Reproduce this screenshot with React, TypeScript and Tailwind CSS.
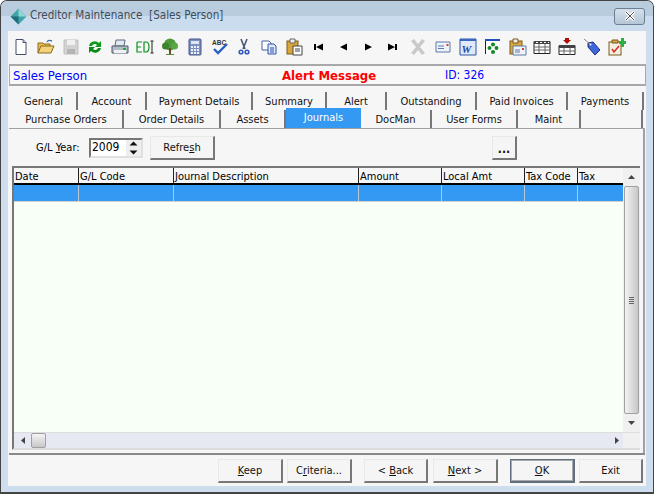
import React from "react";

const font = "font-['Tahoma','DejaVu_Sans_Condensed','Noto_Sans',sans-serif]";

function Ico({ children }: { children: React.ReactNode }) {
  return (
    <svg width="18" height="18" viewBox="0 0 18 18" className="shrink-0">
      {children}
    </svg>
  );
}

const icons: React.ReactNode[] = [
  // new
  <Ico key="new"><path d="M4 1.5h7l3 3v12H4z" fill="#fff" stroke="#44506a" /><path d="M11 1.5v3h3" fill="#cfd8ea" stroke="#44506a" /></Ico>,
  // open
  <Ico key="open"><path d="M1 15V5h5l1 1h6v2" fill="#e8bc55" stroke="#8a6a1c" /><path d="M1 15l3-7h13l-3 7z" fill="#f3d27c" stroke="#8a6a1c" /><path d="M10 4c1-2 3-2 5-1" fill="none" stroke="#3c6ea8" strokeWidth="1.4" /></Ico>,
  // save disabled
  <Ico key="save"><path d="M2 2h14v14H2z" fill="#d2d2d2" stroke="#c0c0c0" /><path d="M5 2h8v5H5z" fill="#f0f0f0" /><path d="M5 11h8v5H5z" fill="#b4b4b4" /></Ico>,
  // refresh
  <Ico key="refresh"><path d="M3 8a6 6 0 0 1 10-3l2-2v6h-6l2-2a3 3 0 0 0-5 1z" fill="#0d9a1c" /><path d="M15 10a6 6 0 0 1-10 3l-2 2V9h6l-2 2a3 3 0 0 0 5-1z" fill="#0b8a18" /></Ico>,
  // print
  <Ico key="print"><path d="M5 2h9l-1 6H4z" fill="#e4e8f0" stroke="#5d6b80" /><path d="M1 8h16v7H1z" fill="#b4bcc8" stroke="#4f5b6c" /><path d="M3 12h12v3H3z" fill="#eef1f5" /><path d="M12 10h3v2h-3z" fill="#18b030" /></Ico>,
  // ED cursor
  <Ico key="ed"><path d="M1 4h5M1 4v10h5M1 9h4M8 4h2q3 0 3 5t-3 5H8z" fill="none" stroke="#0d8f1e" strokeWidth="1.2" /><path d="M14.5 3h3M16 3v12M14.5 15h3" stroke="#222" fill="none" /></Ico>,
  // tree
  <Ico key="tree"><circle cx="9" cy="6.5" r="6" fill="#4f9a3a" /><circle cx="4.5" cy="8" r="3.5" fill="#3d8430" /><circle cx="13.5" cy="8" r="3.5" fill="#5aa845" /><path d="M8 10h2v6H8z" fill="#6b4a24" /><path d="M5 16.5h8" stroke="#5c8a3a" /></Ico>,
  // calculator
  <Ico key="calc"><rect x="3" y="1" width="12" height="16" rx="1" fill="#7f8fc0" stroke="#48568a" /><path d="M5 3h8v3H5z" fill="#dce4f6" /><path d="M5 8h2v2H5zM8 8h2v2H8zM11 8h2v2h-2zM5 11h2v2H5zM8 11h2v2H8zM11 11h2v2h-2zM5 14h2v2H5zM8 14h2v2H8zM11 14h2v2h-2z" fill="#eef0fa" /></Ico>,
  // spell
  <Ico key="spell"><text x="1" y="6.5" fontSize="6.5" fontWeight="700" fill="#333" fontFamily="'Liberation Sans',sans-serif">ABC</text><path d="M3 11l4 4 9-9" fill="none" stroke="#2a5fc0" strokeWidth="2.4" /></Ico>,
  // cut
  <Ico key="cut"><path d="M6 1l4 10M12 1L8 11" stroke="#4a5a78" strokeWidth="1.6" fill="none" /><circle cx="6" cy="14" r="2.6" fill="#3458b8" /><circle cx="12" cy="14" r="2.6" fill="#3458b8" /><circle cx="6" cy="14" r="1" fill="#fff" /><circle cx="12" cy="14" r="1" fill="#fff" /></Ico>,
  // copy
  <Ico key="copy"><path d="M2 3h7l2 2v7H2z" fill="#fff" stroke="#46639e" /><path d="M8 6h6l2 2v8H8z" fill="#dfe9fa" stroke="#2c54a8" /><path d="M10 10h4M10 12h4M10 14h4" stroke="#2c54a8" /></Ico>,
  // paste
  <Ico key="paste"><rect x="2" y="3" width="11" height="13" fill="#d9a63c" stroke="#7a5a1a" /><path d="M5 1h5v4H5z" fill="#eee" stroke="#666" /><path d="M8 8h9v9H8z" fill="#fff" stroke="#444" /><path d="M10 11h5M10 13h5" stroke="#444" /></Ico>,
  // first
  <Ico key="first"><path d="M4 6h2v6H4zM13 5.5v7L6 9z" fill="#000" /></Ico>,
  // prev
  <Ico key="prev"><path d="M12 5.5v7L5 9z" fill="#000" /></Ico>,
  // next
  <Ico key="next"><path d="M5 5.5v7l7-3.5z" fill="#000" /></Ico>,
  // last
  <Ico key="last"><path d="M4 5.5v7l7-3.5zM11 6h2v6h-2z" fill="#000" /></Ico>,
  // delete disabled
  <Ico key="del"><path d="M2 3l3-2 4 5 4-5 3 2-5 6 5 6-3 2-4-5-4 5-3-2 5-6z" fill="#c9c9c9" /></Ico>,
  // mail
  <Ico key="mail"><path d="M2 4h14v10H2z" fill="#eef3fb" stroke="#5c7aa8" /><path d="M4 8h6M4 10.5h6" stroke="#5c7aa8" /><path d="M12.5 6h2v2h-2z" fill="#d84030" /></Ico>,
  // word
  <Ico key="word"><path d="M1 1h16v16H1z" fill="#dfe9f8" stroke="#2c54a8" /><path d="M1 1h16v2H1z" fill="#3c68c0" /><text x="2.5" y="14.5" fontSize="11" fontWeight="700" fontStyle="italic" fill="#1f4aa8" fontFamily="'Liberation Serif',serif">W</text></Ico>,
  // org
  <Ico key="org"><path d="M1.5 1.5h14v14h-14z" fill="#fff" /><path d="M1 1h15v2H1z" fill="#2050c0" /><path d="M1.5 3v13" stroke="#222" /><circle cx="9" cy="6.5" r="2" fill="#118a22" /><circle cx="5.5" cy="10" r="2" fill="#118a22" /><circle cx="12.5" cy="10" r="2" fill="#118a22" /><circle cx="9" cy="14" r="2" fill="#118a22" /></Ico>,
  // paste mail
  <Ico key="pm"><rect x="1" y="3" width="12" height="13" fill="#d9a63c" stroke="#7a5a1a" /><path d="M4 1h5v4H4z" fill="#eee" stroke="#7a5a1a" /><path d="M4 8h13v9H4z" fill="#eef3fb" stroke="#5c7aa8" /><path d="M6 12h5M6 14h5" stroke="#5c7aa8" /><path d="M13 10h2v2h-2z" fill="#d84030" /></Ico>,
  // table
  <Ico key="table"><path d="M1 3.5h16v12H1z" fill="#fff" stroke="#222" /><path d="M1 3h16v3H1z" fill="#444" /><path d="M3 4.5h2M7 4.5h2M11 4.5h2M15 4.5h1" stroke="#fff" /><path d="M1 9h16M1 12h16M6 6v9M12 6v9" stroke="#666" /></Ico>,
  // table with arrow
  <Ico key="table2"><path d="M1 7.5h16v9H1z" fill="#fff" stroke="#222" /><path d="M1 7h16v3H1z" fill="#444" /><path d="M1 13h16M6 10v7M12 10v7" stroke="#666" /><path d="M7 0h4v2h2l-4 4-4-4h2z" fill="#b00c0c" /></Ico>,
  // tag
  <Ico key="tag"><path d="M5 5l5-1 7 8-5 5-7-8z" fill="#3c68d8" stroke="#1c2f80" /><path d="M1 1l6 5" stroke="#888" /><circle cx="7.5" cy="6.5" r="1" fill="#fff" /></Ico>,
  // clipboard add
  <Ico key="add"><rect x="1" y="4" width="12" height="13" fill="#f4efe4" stroke="#7a5a1a" /><path d="M4 2h6v3H4z" fill="#d9a63c" stroke="#7a5a1a" /><path d="M4 11l2 3 5-6" fill="none" stroke="#d83020" strokeWidth="1.6" /><path d="M13 0h3v3h2v3h-2v3h-3V6h-2V3h2z" fill="#28b040" /></Ico>,
];

const row1 = [
  { t: "General", w: "w-[67px]" },
  { t: "Account", w: "w-[69px]" },
  { t: "Payment Details", w: "w-[106px]" },
  { t: "Summary", w: "w-[74px]" },
  { t: "Alert", w: "w-[60px]" },
  { t: "Outstanding", w: "w-[90px]" },
  { t: "Paid Invoices", w: "w-[91px]" },
  { t: "Payments", w: "w-[76px]" },
];

const row2 = [
  { t: "Purchase Orders", w: "w-[114px]" },
  { t: "Order Details", w: "w-[97px]" },
  { t: "Assets", w: "w-[65px]" },
  { t: "Journals", w: "w-[75px]", active: true },
  { t: "DocMan", w: "w-[71px]" },
  { t: "User Forms", w: "w-[86px]" },
  { t: "Maint", w: "w-[63px]" },
  { t: "", w: "w-[62px]" },
];

const cols = [
  { t: "Date", w: "w-[65px]" },
  { t: "G/L Code", w: "w-[95px]" },
  { t: "Journal Description", w: "w-[185px]" },
  { t: "Amount", w: "w-[83px]" },
  { t: "Local Amt", w: "w-[83px]" },
  { t: "Tax Code", w: "w-[53px]" },
  { t: "Tax", w: "w-[45px]" },
];

function Btn({ children, w, def }: { children: React.ReactNode; w: string; def?: boolean }) {
  return (
    <button
      className={`${w} h-[24px] pt-[2px] flex items-center justify-center text-[11px] text-[#111] bg-[#f5f5f5] border-t border-l ${
        def
          ? "border-[#5f6f80] border-r-2 border-b-2 border-r-[#5f6f80] border-b-[#5f6f80] shadow-[inset_0_0_0_1px_#aaa]"
          : "border-[#e8e8e8] border-r-2 border-b-2 border-r-[#777] border-b-[#777]"
      }`}
    >
      {children}
    </button>
  );
}

export default function App() {
  return (
    <div className={`${font} w-[654px] h-[494px] flex flex-col overflow-hidden rounded-t-[7px] border border-[#444] border-b-2 bg-[#cfdeef] text-[11px]`}>
      {/* title bar */}
      <div className="h-[30px] flex items-center pl-[9px] pr-[8px] bg-gradient-to-b from-[#b9ccdd] from-50% to-[#cbdcee] to-50%">
        <svg width="17" height="17" viewBox="0 0 17 17">
          <path d="M8.5 0.5l8 8-8 8-8-8z" fill="#3fa6a8" />
          <path d="M8.5 0.5l8 8h-8z" fill="#8fd4d6" />
          <path d="M8.5 16.5l-8-8h8z" fill="#1f6f78" />
        </svg>
        <span className="ml-[3px] text-[11.6px] text-[#3d4d5c] whitespace-pre">Creditor Maintenance  [Sales Person]</span>
        <div className="ml-auto w-[31px] h-[17px] rounded-[3px] border border-[#6d7e90] bg-gradient-to-b from-[#d5e0ec] to-[#b5c6d6] flex items-center justify-center">
          <svg width="12" height="10" viewBox="0 0 12 10">
            <path d="M2 1l8 8M10 1L2 9" stroke="#fff" strokeWidth="3" />
            <path d="M2 1l8 8M10 1L2 9" stroke="#555" strokeWidth="1" />
          </svg>
        </div>
      </div>

      {/* client area */}
      <div className="mx-[7px] h-[455px] flex flex-col bg-[#f6f6f6]">
        {/* toolbar */}
        <div className="h-[31px] flex items-center gap-[6.83px] pl-[4px]">
          {icons}
        </div>

        {/* header strip */}
        <div className="h-[22px] mt-[2px] ml-[1px] flex items-center border-t-2 border-b-2 border-l border-r border-[#a8a8a8] bg-[#f8f8f8] text-[13px]">
          <span className="w-[272px] pl-[3px] text-[#0000ff] leading-none">Sales Person</span>
          <span className="w-[163px] text-[13px] font-bold text-[#ff0000] leading-none">Alert Message</span>
          <span className="text-[12px] text-[#0000ff] leading-none">ID: 326</span>
        </div>

        {/* tabs */}
        <div className="mt-[6px] ml-[3px] flex h-[18px]">
          {row1.map((tab) => (
            <div key={tab.t} className={`${tab.w} flex items-center justify-center pt-[3px] border-r-2 border-[#777] text-[11px] text-[#111]`}>
              {tab.t}
            </div>
          ))}
        </div>
        <div className="ml-[2px] flex h-[18px]">
          {row2.map((tab) => (
            <div
              key={tab.t || "blank"}
              className={`${tab.w} flex items-center justify-center text-[11px] ${
                tab.active ? "bg-[#3399f3] text-white h-[20px] -mt-[2px] pt-[1px]" : "pt-[2px] border-r-2 border-[#777] text-[#111]"
              }`}
            >
              {tab.t}
            </div>
          ))}
        </div>

        {/* tab page */}
        <div className="ml-[1px] mr-[1px] h-[325px] flex flex-col border-t border-r-2 border-[#a0a0a0] pl-[3px] pr-[3px] pb-[3px]">
          <div className="h-[37px] pt-[1px] flex items-center">
            <span className="ml-[24px] w-[53px] shrink-0">
              G/L <u>Y</u>ear:
            </span>
            <div className="w-[54px] h-[20px] flex border-2 border-[#777] border-r-[#e0e0e0] border-b-[#e0e0e0] bg-white">
              <span className="flex-1 pl-[1px] leading-[15px] text-[12px]">2009</span>
              <div className="w-[15px] flex flex-col bg-[#eee]">
                <svg width="15" height="8" viewBox="0 0 15 8"><path d="M7.5 1.5l4 4h-8z" fill="#111" /></svg>
                <svg width="15" height="8" viewBox="0 0 15 8"><path d="M7.5 6.5l4-4h-8z" fill="#111" /></svg>
              </div>
            </div>
            <div className="ml-[7px]">
              <Btn w="w-[65px]">
                <span>
                  Refre<u>s</u>h
                </span>
              </Btn>
            </div>
            <div className="ml-[277px]">
              <Btn w="w-[25px]"><span className="font-bold text-[12px]">...</span></Btn>
            </div>
          </div>

          {/* grid */}
          <div className="flex-1 flex flex-col border-t-2 border-l-2 border-b-2 border-[#777] border-b-[#ddd] bg-[#f7fff7]">
            <div className="flex-1 flex min-h-0">
              <div className="flex-1 flex flex-col min-w-0">
                <div className="h-[17px] flex bg-[#f6f6f6] border-b-2 border-black">
                  {cols.map((c) => (
                    <div key={c.t} className={`${c.w} pl-[1px] leading-[17px] border-r border-[#222] whitespace-nowrap last:border-r-0`}>
                      {c.t}
                    </div>
                  ))}
                </div>
                <div className="h-[17px] flex bg-[#3399f3] border-b border-[#d0d0d0]">
                  {cols.map((c) => (
                    <div key={c.t} className={`${c.w} border-r border-[#b8c8d8] last:border-r-0`} />
                  ))}
                </div>
              </div>
              {/* vertical scrollbar */}
              <div className="w-[17px] flex flex-col bg-[#f0f0f0]">
                <div className="h-[18px] flex items-center justify-center">
                  <svg width="7" height="4" viewBox="0 0 7 4"><path d="M3.5 0l3.5 4H0z" fill="#444" /></svg>
                </div>
                <div className="flex-1 mx-[1px] flex items-center justify-center rounded-[2px] border border-[#a0a0a0] bg-gradient-to-r from-[#f2f2f2] to-[#c8c8c8]">
                  <div className="w-[5px] h-[7px] bg-[repeating-linear-gradient(#666_0,#666_1px,transparent_1px,transparent_2px)]" />
                </div>
                <div className="h-[18px] flex items-center justify-center">
                  <svg width="7" height="4" viewBox="0 0 7 4"><path d="M3.5 4L7 0H0z" fill="#444" /></svg>
                </div>
              </div>
            </div>
            {/* horizontal scrollbar */}
            <div className="h-[16px] flex items-center bg-[#e6e8f2] border-t border-[#ddd]">
              <div className="w-[17px] flex justify-center">
                <svg width="4" height="7" viewBox="0 0 4 7"><path d="M0 3.5L4 0v7z" fill="#444" /></svg>
              </div>
              <div className="w-[15px] h-[15px] rounded-[2px] border border-[#a0a0a0] bg-gradient-to-b from-[#f4f4f4] to-[#c8c8c8]" />
              <div className="flex-1" />
              <div className="w-[12px] flex justify-center">
                <svg width="4" height="7" viewBox="0 0 4 7"><path d="M4 3.5L0 0v7z" fill="#444" /></svg>
              </div>
              <div className="w-[17px] h-full bg-[#f0f0f0]" />
            </div>
          </div>
        </div>
        <div className="ml-[1px] mr-[1px] h-[6px] border-t-2 border-[#888]" />

        {/* bottom buttons */}
        <div className="h-[27px] flex items-start pl-[210px]">
          <Btn w="w-[65px]"><span><u>K</u>eep</span></Btn>
          <div className="ml-[4px]"><Btn w="w-[65px]"><span>C<u>r</u>iteria...</span></Btn></div>
          <div className="ml-[12px]"><Btn w="w-[64px]"><span>&lt; <u>B</u>ack</span></Btn></div>
          <div className="ml-[5px]"><Btn w="w-[65px]"><span><u>N</u>ext &gt;</span></Btn></div>
          <div className="ml-[12px]"><Btn w="w-[65px]" def><span><u>O</u>K</span></Btn></div>
          <div className="ml-[4px]"><Btn w="w-[64px]">Exit</Btn></div>
        </div>
      </div>
    </div>
  );
}
